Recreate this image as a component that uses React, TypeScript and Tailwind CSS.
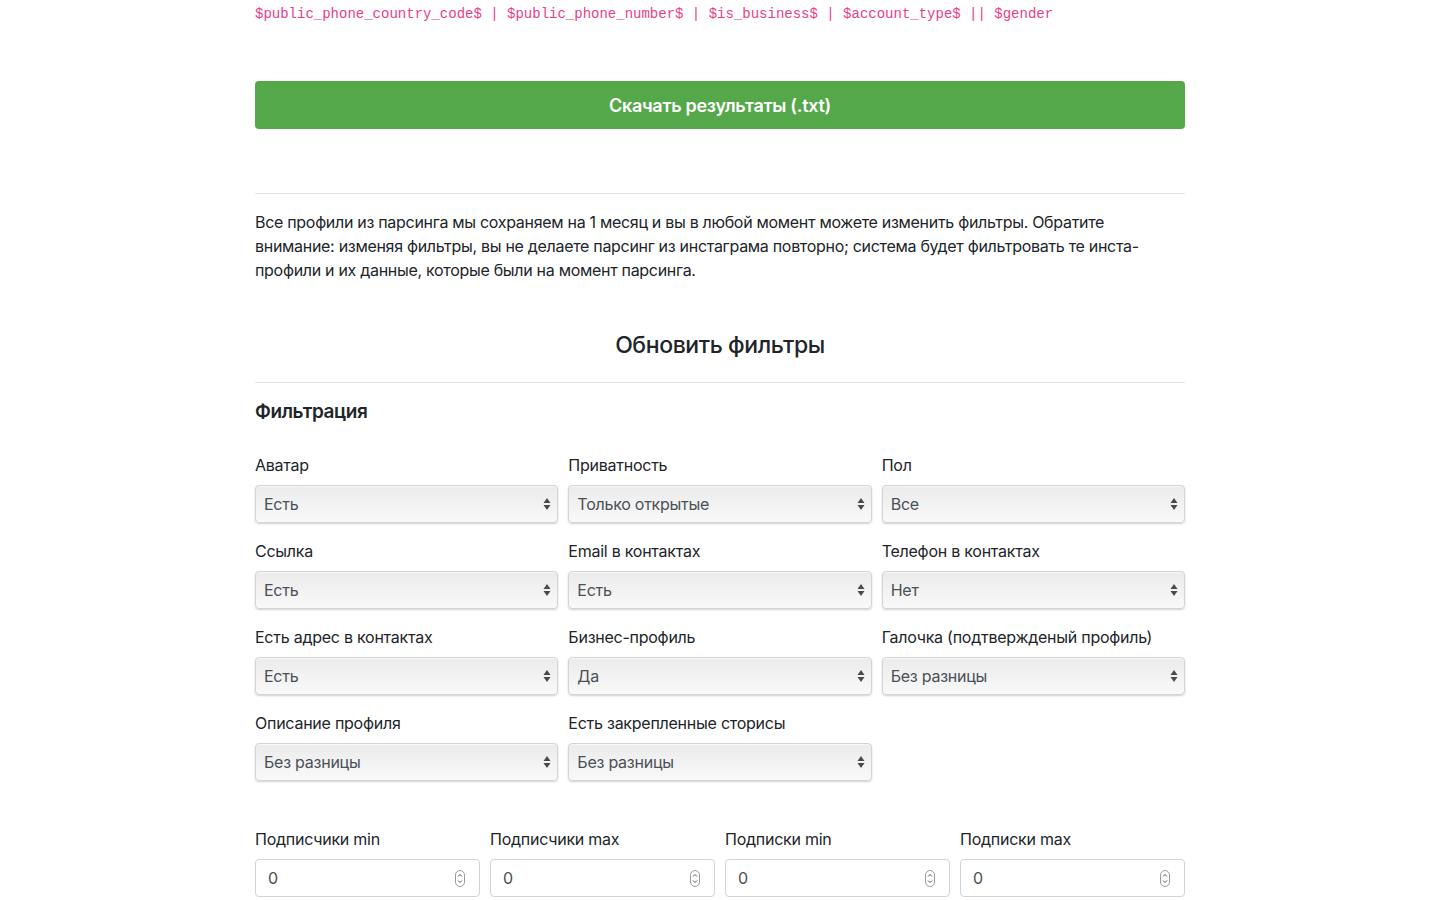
import React from "react";

const Arrows = () => (
  <svg width="8" height="14" viewBox="0 0 8 14" className="shrink-0">
    <path d="M4 1 L7.5 6 L0.5 6 Z" fill="#4a4a4a" />
    <path d="M4 13 L7.5 8 L0.5 8 Z" fill="#4a4a4a" />
  </svg>
);

const Spin = () => (
  <svg width="10" height="17" viewBox="0 0 10 17" className="shrink-0">
    <rect x="0.5" y="0.5" width="9" height="16" rx="4.5" fill="white" stroke="#9a9a9a" />
    <path d="M3 6.5 L5 4.5 L7 6.5" fill="none" stroke="#555" strokeWidth="1" />
    <path d="M3 10.5 L5 12.5 L7 10.5" fill="none" stroke="#555" strokeWidth="1" />
  </svg>
);

const Select = ({ label, value }: { label: string; value: string }) => (
  <div className="mb-4">
    <div className="mb-2 leading-6">{label}</div>
    <div className="h-[38px] rounded-[4px] border border-[#d4d4d4] bg-gradient-to-b from-[#ebebeb] to-[#f9f9f9] shadow-[0_1px_2px_rgba(0,0,0,0.18),inset_0_1px_0_rgba(255,255,255,0.6)] flex items-center justify-between pl-2 pr-[6px] text-[#495057]">
      <span>{value}</span>
      <Arrows />
    </div>
  </div>
);

const NumInput = ({ label }: { label: string }) => (
  <div className="mb-4">
    <div className="mb-2 leading-6">{label}</div>
    <div className="h-[38px] rounded-[4px] border border-[#ced4da] bg-white flex items-center justify-between pl-3 pr-[14px] text-[#495057]">
      <span>0</span>
      <Spin />
    </div>
  </div>
);

export default function App() {
  const selects: [string, string][] = [
    ["Аватар", "Есть"],
    ["Приватность", "Только открытые"],
    ["Пол", "Все"],
    ["Ссылка", "Есть"],
    ["Email в контактах", "Есть"],
    ["Телефон в контактах", "Нет"],
    ["Есть адрес в контактах", "Есть"],
    ["Бизнес-профиль", "Да"],
    ["Галочка (подтвержденый профиль)", "Без разницы"],
    ["Описание профиля", "Без разницы"],
    ["Есть закрепленные сторисы", "Без разницы"],
  ];
  return (
    <div className="min-h-[900px] bg-white text-[#212529] text-base font-['Inter','Noto_Sans',sans-serif] tracking-[-0.25px]">
      <div className="w-[930px] mx-auto">
        <div className="pt-[4px] h-[25px] leading-[21px] text-[14px] text-[#e83e8c] font-['Liberation_Mono',monospace] tracking-normal">
          $public_phone_country_code$ | $public_phone_number$ | $is_business$ | $account_type$ || $gender
        </div>
        <button className="mt-[56px] w-full h-[48px] rounded-[4px] bg-[#55a84a] text-white text-[18px] font-semibold tracking-[-0.3px] flex items-center justify-center">
          Скачать результаты (.txt)
        </button>
        <hr className="mt-[64px] border-t border-[#e6e6e6]" />
        <p className="mt-[16px] leading-6 tracking-[-0.3px]">
          Все профили из парсинга мы сохраняем на 1 месяц и вы в любой момент можете изменить фильтры. Обратите внимание: изменяя фильтры, вы не делаете парсинг из инстаграма повторно; система будет фильтровать те инста-профили и их данные, которые были на момент парсинга.
        </p>
        <h2 className="mt-[49px] text-center text-[23px] leading-[28px] font-medium tracking-[-0.4px]">Обновить фильтры</h2>
        <hr className="mt-[23px] border-t border-[#e6e6e6]" />
        <h3 className="mt-[17px] text-[19px] leading-6 font-semibold tracking-[-0.4px]">Фильтрация</h3>
        <div className="mt-[29px] grid grid-cols-3 gap-x-[10px]">
          {selects.map(([l, v]) => (
            <Select key={l} label={l} value={v} />
          ))}
        </div>
        <div className="mt-[30px] grid grid-cols-4 gap-x-[10px]">
          <NumInput label="Подписчики min" />
          <NumInput label="Подписчики max" />
          <NumInput label="Подписки min" />
          <NumInput label="Подписки max" />
        </div>
      </div>
    </div>
  );
}
